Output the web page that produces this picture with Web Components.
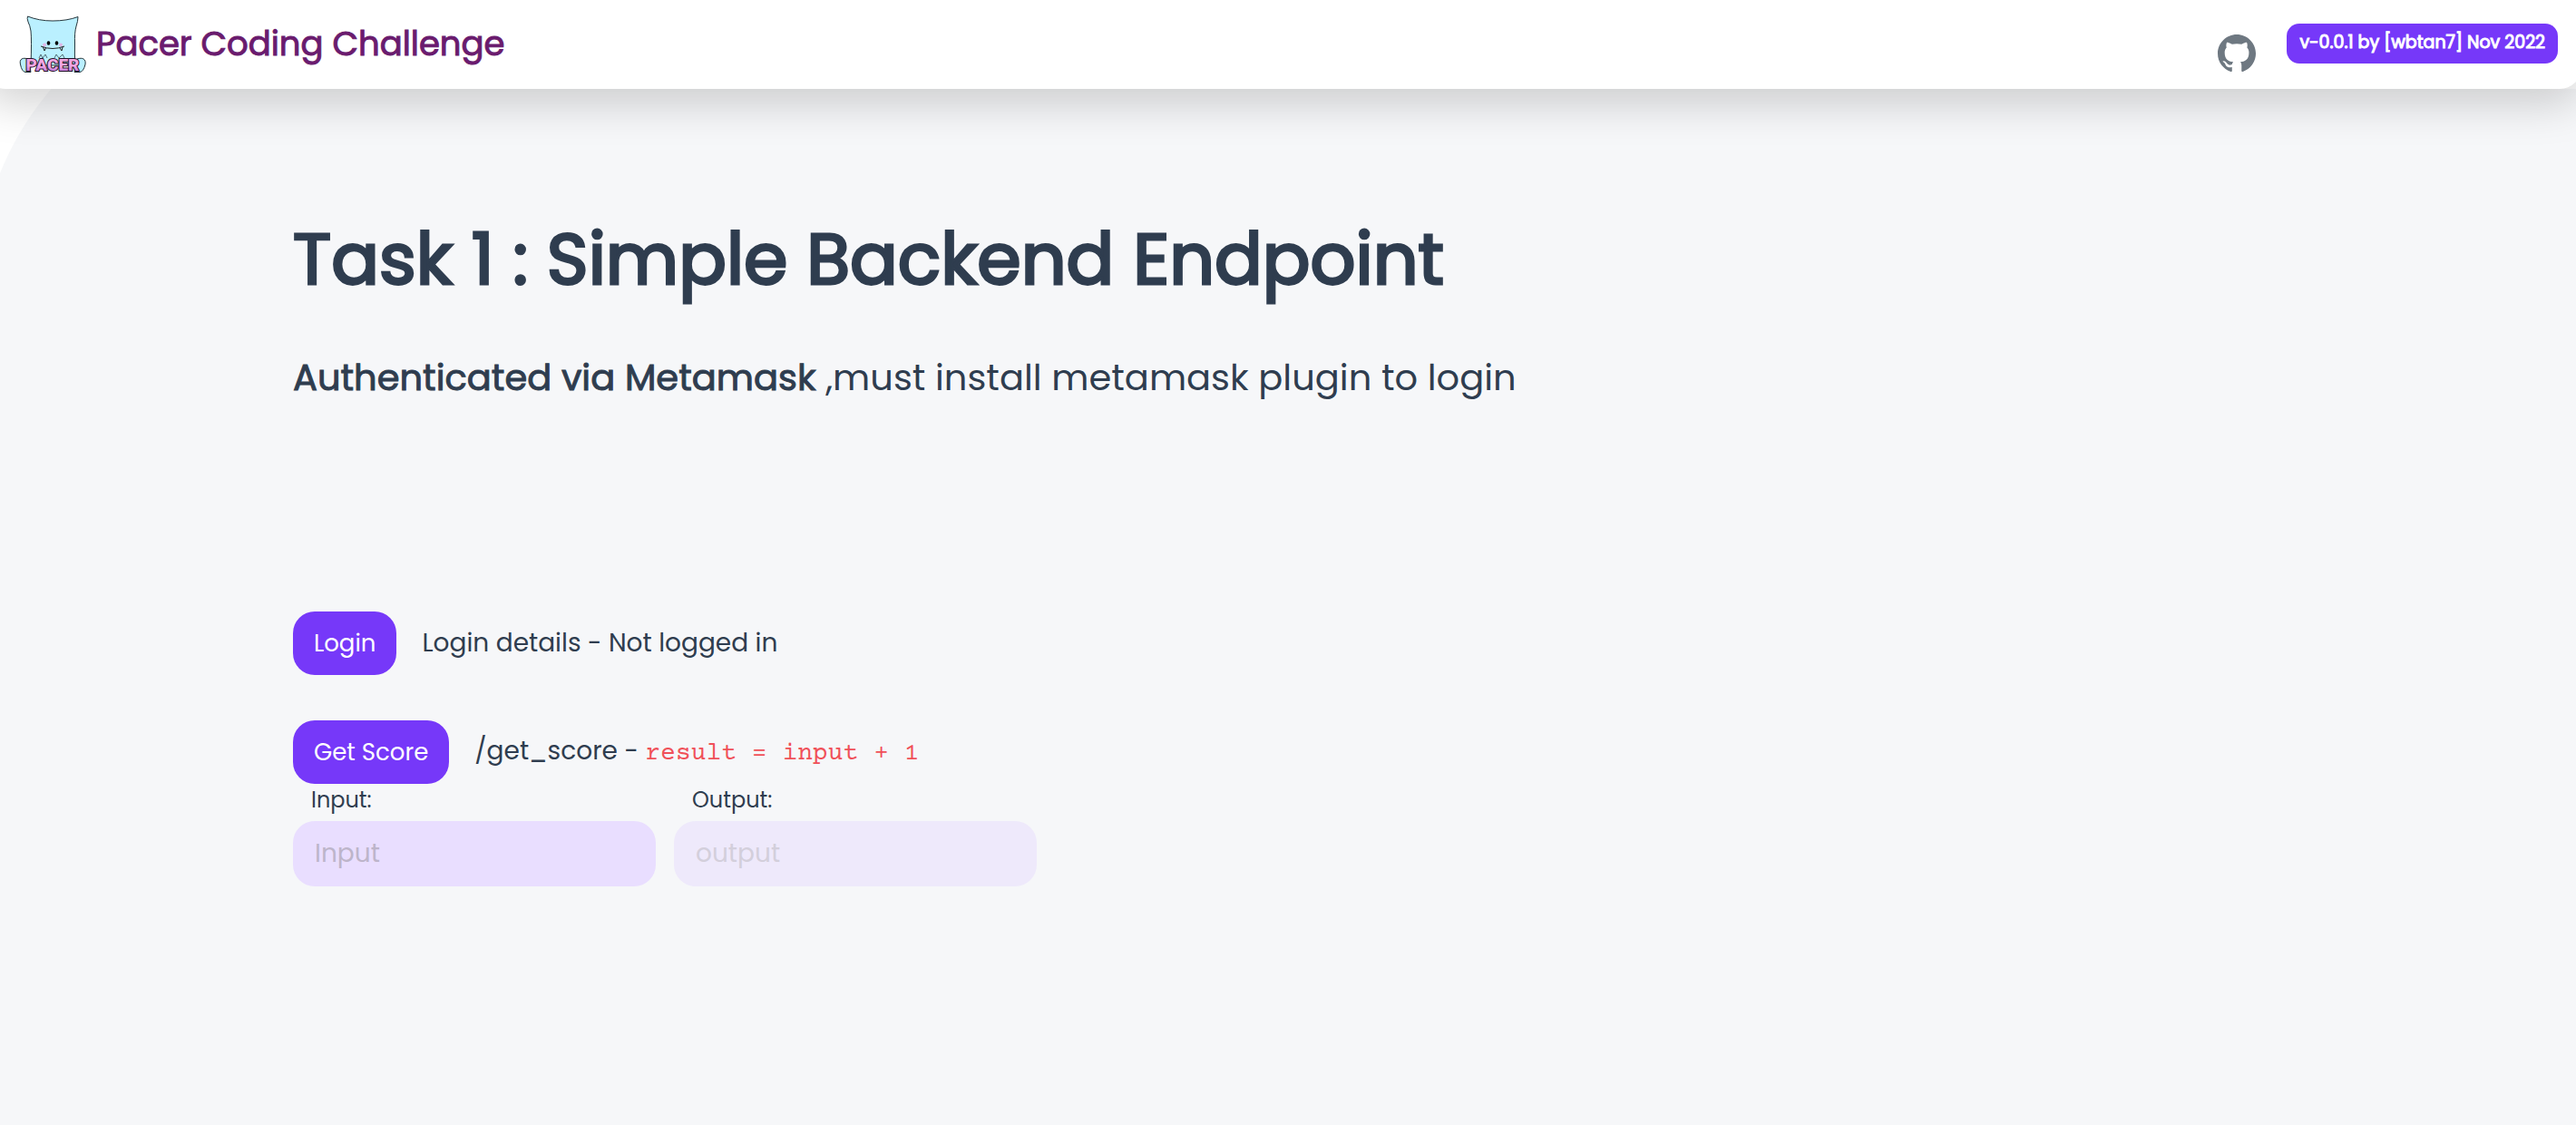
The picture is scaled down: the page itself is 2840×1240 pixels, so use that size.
<!DOCTYPE html>
<html lang="en">
<head>
<meta charset="utf-8">
<title>Pacer Coding Challenge</title>
<style>
  html, body { margin: 0; min-height: 100%; }
  body { background: #fff; color: #2f3d4f; font-family: Poppins, Inter, "Open Sans", sans-serif; }
</style>
</head>
<body>
<pacer-app></pacer-app>
<script>
const define = (name, html, setup) => customElements.define(name, class extends HTMLElement {
  connectedCallback() {
    if (this.shadowRoot) return;
    this.attachShadow({ mode: 'open' }).innerHTML = html;
    if (setup) setup(this, this.shadowRoot);
  }
});

define('pacer-logo', `
<style>:host{display:block;width:76px;height:66px} svg{display:block;width:100%;height:100%;overflow:visible} text{font:900 19px/20px Roboto,sans-serif}</style>
<svg viewBox="20 16 76 66" role="img" aria-label="Pacer">
  <defs><linearGradient id="pink" x1="0" y1="0" x2="0" y2="1"><stop offset=".55" stop-color="#f1a6e2"/><stop offset=".85" stop-color="#b873dc"/></linearGradient></defs>
  <g fill="#baf0ff" stroke="#25363c" stroke-width="1" stroke-linejoin="round">
    <path d="M30.500 18 Q43 23 58 23 Q74 23 86 18.500 Q86 23 84 29 Q82 36 82.500 48 Q82 60 83 72 H34 Q35 44 34 34 Q33 28 31 24 Q29.500 20 30.500 18Z"/>
    <path d="M31 65 C25 63 21 65 22.500 71 Q24 79 28 79.500 H34Z"/>
    <path d="M85 65 C91 63 95 65 94 71 Q92 79 88 79.500 H82Z"/>
  </g>
  <path d="M43 64 L45 60 L47 64 L50 60 L52 64 M60 64 L62 60 L65 64 L69 60 L71 64" fill="none" stroke="#25363c" stroke-width=".7"/>
  <circle cx="49" cy="49.500" r="2" fill="#dfb8e8"/><circle cx="67" cy="49.500" r="2" fill="#dfb8e8"/>
  <ellipse cx="53.500" cy="47.500" rx="1.800" ry="2.300"/><ellipse cx="62.500" cy="47.500" rx="1.800" ry="2.300"/>
  <path d="M45 51 Q58 56 71 51 M47.500 52 L49 56 L50.500 53 M66 53 L68 56 L69 52" fill="none" stroke="#222" stroke-width="1"/>
  <text x="58" y="78" text-anchor="middle" fill="url(#pink)" stroke="#1f1026" stroke-width="2" paint-order="stroke" stroke-linejoin="round">PACER</text>
</svg>`);

define('github-link', `
<style>:host{display:block} a{display:block;color:#6e7881} svg{display:block;width:42px;height:42px}</style>
<a href="#" aria-label="GitHub"><svg viewBox="0 0 16 16" fill="currentColor"><path d="M8 0C3.580 0 0 3.580 0 8c0 3.540 2.290 6.530 5.470 7.590.4.070.55-.17.55-.38 0-.19-.01-.82-.01-1.490-2.010.37-2.530-.49-2.690-.94-.09-.23-.48-.94-.82-1.130-.28-.15-.68-.52-.01-.53.63-.01 1.080.58 1.230.82.72 1.210 1.870.87 2.330.66.07-.52.28-.87.51-1.070-1.780-.2-3.640-.89-3.640-3.950 0-.87.31-1.590.82-2.150-.08-.2-.36-1.020.08-2.120 0 0 .67-.21 2.200.82.64-.18 1.320-.27 2-.27s1.360.09 2 .27c1.530-1.040 2.200-.82 2.200-.82.44 1.100.16 1.920.08 2.120.51.56.82 1.270.82 2.150 0 3.070-1.870 3.750-3.650 3.950.29.25.54.73.54 1.480 0 1.070-.01 1.930-.01 2.200 0 .21.15.46.55.38A8.010 8.010 0 0 0 16 8c0-4.420-3.580-8-8-8z"/></svg></a>`);

define('version-badge', `
<style>:host{display:block;background:#7638f9;color:#fff;border-radius:14px;padding:7px 14px 9px;margin-bottom:2px;font-size:19px;line-height:28px;-webkit-text-stroke:1px;white-space:nowrap}</style><slot></slot>`);

define('app-header', `
<style>
:host{display:block;position:relative;z-index:1}
header{display:flex;align-items:center;gap:10px;height:98px;box-sizing:border-box;margin:0 -6px 0 -18px;padding:0 26px 0 38px;background:#fff;border-radius:0 0 24px 24px;box-shadow:0 16px 48px rgba(0,0,0,.176)}
h1{margin:0 0 2px;font-size:37px;line-height:48px;font-weight:400;-webkit-text-stroke:1px;color:#6a1b6e;flex:1}
github-link{margin:20px 24px 0 0}
</style>
<header><pacer-logo></pacer-logo><h1>Pacer Coding Challenge</h1><github-link></github-link><version-badge>v-0.0.1 by [wbtan7] Nov 2022</version-badge></header>`);

define('app-button', `
<style>:host{display:block} button{display:block;border:0;margin:0;background:#7638f9;color:#fff;border-radius:24px;padding:0 23px;height:70px;font:inherit;font-size:26px;line-height:36px}</style>
<button type="button"><slot></slot></button>`);

define('action-row', `
<style>:host{display:flex;align-items:center;gap:28px;font-size:28px;line-height:42px}</style>
<slot name="button"></slot><div><slot></slot></div>`);

define('text-field', `
<style>
:host{display:block;flex:0 1 400px}
label{display:block;padding:0 20px;font-size:24px;line-height:36px}
input{display:block;box-sizing:border-box;width:100%;height:72px;margin:5px 0 0;border:0;border-radius:24px;padding:0 24px;background:#e9deff;color:inherit;font:inherit;font-size:28px}
input::placeholder{color:#bdb5ca;opacity:1}
input:disabled{background:#eee9fb}
input:disabled::placeholder{color:#d3cfdb}
</style>
<label for="f"></label><input id="f" type="text">`, (el, root) => {
  root.querySelector('label').textContent = el.getAttribute('label');
  const input = root.querySelector('input');
  input.placeholder = el.getAttribute('hint');
  input.disabled = el.hasAttribute('disabled');
});

define('task-panel', `
<style>
:host{display:block;padding:136px 323px 0}
h2{margin:0;font-size:78px;line-height:104px;font-weight:400;-webkit-text-stroke:3px}
.lead{margin:46px 0 0;font-size:40px;line-height:64px}
.lead strong{font-weight:400;-webkit-text-stroke:1px}
.actions{display:flex;flex-direction:column;gap:50px;margin-top:226px}
code{font-family:"Courier Prime","Liberation Mono",monospace;font-size:28px;color:#f05058}
.fields{display:flex;gap:20px}
</style>
<h2>Task 1 : Simple Backend Endpoint</h2>
<p class="lead"><strong>Authenticated via Metamask</strong> ,must install metamask plugin to login</p>
<div class="actions">
<action-row><app-button slot="button">Login</app-button>Login details - Not logged in</action-row>
<action-row><app-button slot="button">Get Score</app-button>/get_score - <code>result = input + 1</code></action-row>
</div>
<div class="fields"><text-field label="Input:" hint="Input"></text-field><text-field label="Output:" hint="output" disabled></text-field></div>`);

define('pacer-app', `
<style>
:host{display:flex;flex-direction:column;min-height:100vh;overflow:hidden}
main{flex:1;background:radial-gradient(circle at 312px 219px,#f6f7f9 336px,#fff 337px) 0 0/64px 100px no-repeat #f6f7f9}
</style>
<app-header></app-header><main><task-panel></task-panel></main>`);
</script>
</body>
</html>
